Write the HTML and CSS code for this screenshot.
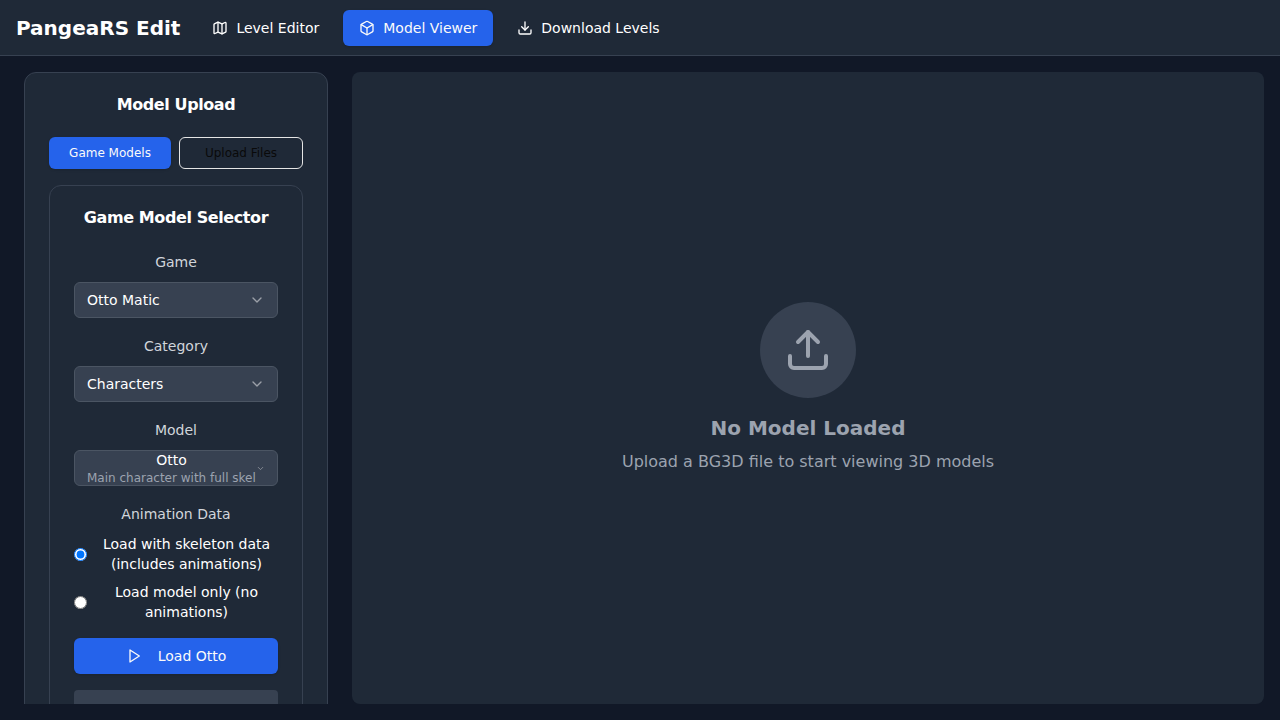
FILE: index.html
```html
<!DOCTYPE html>
<html lang="en">
<head>
<meta charset="utf-8">
<title>PangeaRS Edit</title>
<link rel="stylesheet" href="styles.css">
</head>
<body>
<div class="app">
  <header class="header">
    <h1 class="brand">PangeaRS Edit</h1>
    <nav class="nav">
      <button class="btn nav-btn"><svg class="icon" viewBox="0 0 24 24"><path d="M14.106 5.553a2 2 0 0 0 1.788 0l3.659-1.83A1 1 0 0 1 21 4.619v12.764a1 1 0 0 1-.553.894l-4.553 2.277a2 2 0 0 1-1.788 0l-4.212-2.106a2 2 0 0 0-1.788 0l-3.659 1.83A1 1 0 0 1 3 19.381V6.618a1 1 0 0 1 .553-.894l4.553-2.277a2 2 0 0 1 1.788 0z"/><path d="M15 5.764v15"/><path d="M9 3.236v15"/></svg>Level Editor</button>
      <button class="btn nav-btn primary"><svg class="icon" viewBox="0 0 24 24"><path d="M21 8a2 2 0 0 0-1-1.73l-7-4a2 2 0 0 0-2 0l-7 4A2 2 0 0 0 3 8v8a2 2 0 0 0 1 1.73l7 4a2 2 0 0 0 2 0l7-4A2 2 0 0 0 21 16Z"/><path d="m3.3 7 8.7 5 8.7-5"/><path d="M12 22V12"/></svg>Model Viewer</button>
      <button class="btn nav-btn"><svg class="icon" viewBox="0 0 24 24"><path d="M21 15v4a2 2 0 0 1-2 2H5a2 2 0 0 1-2-2v-4"/><path d="m7 10 5 5 5-5"/><path d="M12 15V3"/></svg>Download Levels</button>
    </nav>
  </header>
  <main class="main">
    <aside class="sidebar">
      <section class="card">
        <h2 class="card-title">Model Upload</h2>
        <div class="tabs">
          <button class="btn tab primary">Game Models</button>
          <button class="btn tab outline">Upload Files</button>
        </div>
        <section class="card selector">
          <h2 class="card-title">Game Model Selector</h2>
          <div class="fields">
            <div class="field">
              <span class="label">Game</span>
              <button class="select"><span>Otto Matic</span><svg class="icon chevron" viewBox="0 0 24 24"><path d="m6 9 6 6 6-6"/></svg></button>
            </div>
            <div class="field">
              <span class="label">Category</span>
              <button class="select"><span>Characters</span><svg class="icon chevron" viewBox="0 0 24 24"><path d="m6 9 6 6 6-6"/></svg></button>
            </div>
            <div class="field">
              <span class="label">Model</span>
              <button class="select model-select">
                <span class="model"><span>Otto</span><span class="model-note">Main character with full skel</span></span>
                <svg class="icon chevron small" viewBox="0 0 24 24"><path d="m6 9 6 6 6-6"/></svg>
              </button>
            </div>
            <div class="field">
              <span class="label">Animation Data</span>
              <div class="radios">
                <label class="radio"><input type="radio" name="anim" checked><span>Load with skeleton data (includes animations)</span></label>
                <label class="radio"><input type="radio" name="anim"><span>Load model only (no animations)</span></label>
              </div>
            </div>
            <button class="btn load primary"><svg class="icon" viewBox="0 0 24 24"><path d="m6 3 14 9-14 9z"/></svg>Load Otto</button>
            <div class="info"></div>
          </div>
        </section>
      </section>
    </aside>
    <section class="viewer">
      <div class="upload-circle"><svg class="upload-icon" viewBox="0 0 24 24"><path d="M21 15v4a2 2 0 0 1-2 2H5a2 2 0 0 1-2-2v-4"/><path d="m17 8-5-5-5 5"/><path d="M12 3v12"/></svg></div>
      <h3 class="empty-title">No Model Loaded</h3>
      <p class="empty-text">Upload a BG3D file to start viewing 3D models</p>
    </section>
  </main>
</div>
</body>
</html>
```
FILE: styles.css
```css
* { box-sizing: border-box; margin: 0; padding: 0; }
body {
  background: #111827;
  color: #fff;
  font: 14px/20px "DejaVu Sans", sans-serif;
  text-align: center;
}
button { font: inherit; color: inherit; border: 0; background: none; }
svg { fill: none; stroke: currentColor; stroke-width: 2; stroke-linecap: round; stroke-linejoin: round; flex-shrink: 0; }
.icon { width: 16px; height: 16px; }

.app { height: 100vh; display: flex; flex-direction: column; overflow: hidden; }
.header {
  height: 56px; flex-shrink: 0; display: flex; align-items: center; gap: 16px;
  padding: 0 16px; background: #1f2937; border-bottom: 1px solid #374151;
}
.brand { font-size: 20px; line-height: 28px; font-weight: 700; }
.nav { display: flex; gap: 8px; }

.btn { display: flex; align-items: center; justify-content: center; gap: 8px; border-radius: 6px; white-space: nowrap; }
.nav-btn { height: 36px; padding: 0 16px; }
.primary { background: #2563eb; color: #fafafa; box-shadow: 0 1px 3px rgb(0 0 0 / 0.1), 0 1px 2px -1px rgb(0 0 0 / 0.1); }

.main { flex: 1; min-height: 0; display: flex; gap: 24px; padding: 16px 16px 16px 24px; }
.sidebar { width: 304px; flex-shrink: 0; overflow: hidden; }
.card { border: 1px solid #374151; border-radius: 12px; padding: 24px; background: #1f2937; }
.sidebar > .card { min-height: 900px; }
.card-title { font-size: 16px; line-height: 16px; font-weight: 700; letter-spacing: -0.4px; }

.tabs { display: grid; grid-template-columns: 122px 124px; gap: 8px; margin: 24px 0 16px; }
.tab { height: 32px; font-size: 12px; line-height: 16px; }
.outline { border: 1px solid #e5e5e5; color: #0a0a0a; }

.selector { min-height: 700px; }
.fields { display: flex; flex-direction: column; margin-top: 26px; }
.field { display: flex; flex-direction: column; }
.field + .field { margin-top: 18px; }
.label { color: #d1d5db; line-height: 20px; margin-bottom: 10px; }
.select {
  height: 36px; display: flex; align-items: center; justify-content: space-between;
  padding: 0 12px; background: #374151; border: 1px solid #4b5563; border-radius: 6px; overflow: hidden;
}
.chevron { opacity: 0.5; }
.model { width: 169px; flex-shrink: 0; display: flex; flex-direction: column; white-space: nowrap; }
.model-note { font-size: 12px; line-height: 16px; color: #9ca3af; text-align: left; }
.small { width: 9px; height: 9px; }

.radios { display: flex; flex-direction: column; gap: 8px; }
.radio { display: flex; align-items: center; gap: 8px; }
.radio input { width: 13px; height: 13px; flex-shrink: 0; }
.radio span { flex: 1; }
.load { height: 36px; gap: 16px; margin: 16px 0; }
.info { height: 120px; background: #374151; border-radius: 4px; }

.viewer {
  flex: 1; display: flex; flex-direction: column; align-items: center; justify-content: center;
  background: #1f2937; border-radius: 8px; color: #9ca3af;
}
.upload-circle { width: 96px; height: 96px; border-radius: 50%; background: #374151; display: flex; align-items: center; justify-content: center; margin-bottom: 16px; }
.upload-icon { width: 48px; height: 48px; }
.empty-title { font-size: 20px; line-height: 28px; font-weight: 700; margin-bottom: 8px; }
.empty-text { font-size: 16px; line-height: 24px; }
```
